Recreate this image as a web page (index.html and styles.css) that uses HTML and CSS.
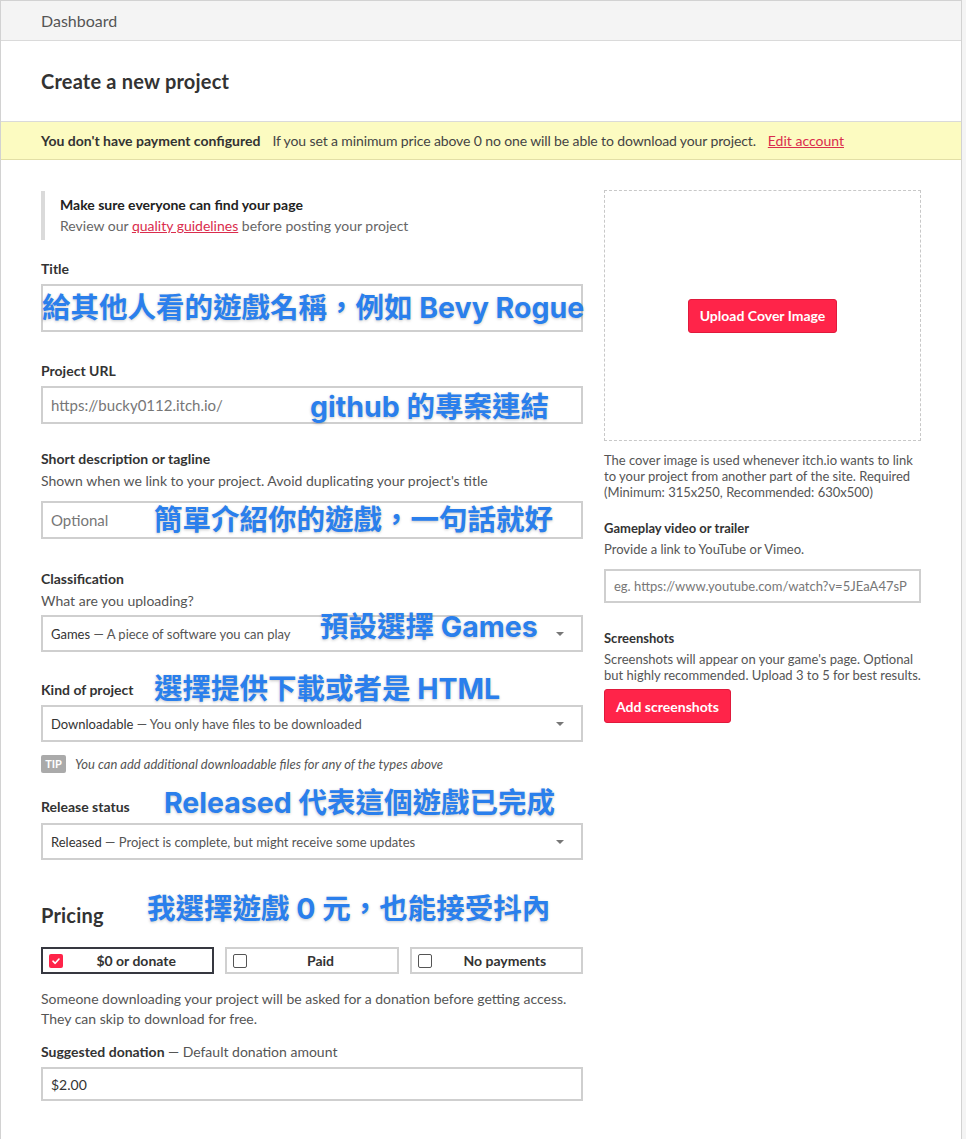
FILE: index.html
```html
<!DOCTYPE html>
<html lang="zh-Hant">
<head>
    <meta charset="UTF-8">
    <meta name="viewport" content="width=device-width, initial-scale=1.0">
    <title>Create a new project</title>
    <link rel="stylesheet" href="styles.css">
</head>
<body>
    <div class="page">
        <header class="top-bar">Dashboard</header>

        <div class="title-bar">
            <h2>Create a new project</h2>
        </div>

        <div class="warning">
            <strong>You don't have payment configured</strong>
            <span>If you set a minimum price above 0 no one will be able to download your project.</span>
            <a href="#">Edit account</a>
        </div>

        <div class="content">
            <div class="left-col">
                <div class="notice">
                    <strong>Make sure everyone can find your page</strong>
                    <p>Review our <a href="#">quality guidelines</a> before posting your project</p>
                </div>

                <div class="field field-title">
                    <label class="label">Title</label>
                    <div class="text-input big"></div>
                    <span class="note note-title">給其他人看的遊戲名稱，例如 Bevy Rogue</span>
                </div>

                <div class="field field-url">
                    <label class="label">Project URL</label>
                    <div class="text-input"><span class="prefix">https://bucky0112.itch.io/</span></div>
                    <span class="note note-url">github 的專案連結</span>
                </div>

                <div class="field field-short">
                    <label class="label">Short description or tagline</label>
                    <div class="sub">Shown when we link to your project. Avoid duplicating your project's title</div>
                    <div class="text-input short-input"><span class="placeholder">Optional</span></div>
                    <span class="note note-short">簡單介紹你的遊戲，一句話就好</span>
                </div>

                <div class="field field-class">
                    <label class="label">Classification</label>
                    <div class="sub">What are you uploading?</div>
                    <div class="select class-select"><span class="strong-opt">Games</span> — A piece of software you can play<i class="arrow"></i></div>
                    <span class="note note-class">預設選擇 Games</span>
                </div>

                <div class="field field-kind">
                    <label class="label">Kind of project</label>
                    <div class="select"><span class="strong-opt">Downloadable</span> — You only have files to be downloaded<i class="arrow"></i></div>
                    <span class="note note-kind">選擇提供下載或者是 HTML</span>
                </div>

                <div class="tip">
                    <span class="tip-badge">TIP</span>
                    <em>You can add additional downloadable files for any of the types above</em>
                </div>

                <div class="field field-release">
                    <label class="label">Release status</label>
                    <div class="select"><span class="strong-opt">Released</span> — Project is complete, but might receive some updates<i class="arrow"></i></div>
                    <span class="note note-release">Released 代表這個遊戲已完成</span>
                </div>

                <div class="pricing-head">
                    <h2>Pricing</h2>
                    <span class="note note-pricing">我選擇遊戲 0 元，也能接受抖內</span>
                </div>

                <div class="price-options">
                    <div class="price-btn selected">
                        <span class="check on">
                            <svg viewBox="0 0 14 14" width="14" height="14"><polyline points="4,7.2 6.2,9.3 10,5" fill="none" stroke="#fff" stroke-width="1.6" stroke-linecap="round" stroke-linejoin="round"/></svg>
                        </span>
                        <span class="price-label">$0 or donate</span>
                    </div>
                    <div class="price-btn">
                        <span class="check"></span>
                        <span class="price-label">Paid</span>
                    </div>
                    <div class="price-btn">
                        <span class="check"></span>
                        <span class="price-label">No payments</span>
                    </div>
                </div>

                <p class="pricing-note">Someone downloading your project will be asked for a donation before getting access. They can skip to download for free.</p>

                <div class="field field-donation">
                    <label class="label">Suggested donation <span class="label-sub">— Default donation amount</span></label>
                    <div class="text-input donation-input">$2.00</div>
                </div>
            </div>

            <div class="right-col">
                <div class="cover-box">
                    <button class="red-button">Upload Cover Image</button>
                </div>
                <p class="side-text cover-text">The cover image is used whenever itch.io wants to link to your project from another part of the site. Required (Minimum: 315x250, Recommended: 630x500)</p>

                <div class="side-label video-label">Gameplay video or trailer</div>
                <p class="side-text side-sub">Provide a link to YouTube or Vimeo.</p>
                <div class="text-input video-input"><span class="placeholder">eg. https://www.youtube.com/watch?v=5JEaA47sP</span></div>

                <div class="side-label shots-label">Screenshots</div>
                <p class="side-text side-sub">Screenshots will appear on your game's page. Optional but highly recommended. Upload 3 to 5 for best results.</p>
                <button class="red-button shots-button">Add screenshots</button>
            </div>
        </div>
    </div>
</body>
</html>
```

FILE: styles.css
```css
/* Global */
body {
    margin: 0;
    padding: 0;
    background-color: #f4f4f4;
    font-family: Lato, "Noto Sans CJK TC", sans-serif;
    color: #333;
}

.page {
    width: 960px;
    min-height: 1200px;
    background-color: #fff;
    border: 1px solid #d2d2d2;
    border-bottom: none;
}

.top-bar {
    height: 39px;
    line-height: 39px;
    padding: 0 40px;
    background-color: #f4f4f4;
    border-bottom: 1px solid #dadada;
    font-size: 16px;
    color: #555;
}

.title-bar {
    height: 80px;
    display: flex;
    align-items: center;
    padding: 0 40px;
    border-bottom: 1px solid #dadada;
}

h2 {
    margin: 0;
    font-size: 20px;
    line-height: 24px;
    font-weight: 700;
    color: #333;
    letter-spacing: 0.2px;
}

.warning {
    height: 37px;
    display: flex;
    align-items: center;
    gap: 12px;
    padding: 0 40px;
    background-color: #fcfbc1;
    border-bottom: 1px solid #e2dfa6;
    font-size: 14px;
    color: #444;
}

.warning span {
    letter-spacing: -0.12px;
}

.warning strong {
    color: #333;
}

a {
    color: #da2c4d;
    text-decoration: underline;
}

.content {
    display: flex;
    gap: 21px;
    padding: 30px 40px 40px;
}

.left-col {
    width: 542px;
}

.right-col {
    width: 317px;
}

/* Left column */
.notice {
    padding: 3px 0 4px 15px;
    margin-top: 1px;
    border-left: 4px solid #dadada;
    font-size: 14px;
    line-height: 21px;
}

.notice strong {
    color: #222;
}

.notice p {
    margin: 0;
    color: #666;
}

.field {
    position: relative;
}

.label {
    display: block;
    font-size: 14px;
    font-weight: 700;
    line-height: 20px;
    margin-bottom: 5px;
    color: #333;
}

.label-sub {
    font-weight: 400;
    color: #555;
}

.sub {
    font-size: 14px;
    line-height: 20px;
    color: #555;
    margin-top: -3px;
}

.text-input {
    box-sizing: border-box;
    height: 38px;
    border: 2px solid #cfcfcf;
    padding: 0 8px;
    display: flex;
    align-items: center;
    font-size: 15px;
    color: #333;
    overflow: hidden;
    white-space: nowrap;
}

.text-input.big {
    height: 48px;
}

.prefix,
.placeholder {
    color: #777;
}

.field-title {
    margin-top: 19px;
}

.field-url {
    margin-top: 29px;
}

.field-short {
    margin-top: 25px;
}

.short-input {
    margin-top: 10px;
}

.select {
    position: relative;
    box-sizing: border-box;
    height: 37px;
    border: 2px solid #cfcfcf;
    padding: 0 8px;
    display: flex;
    align-items: center;
    font-size: 13px;
    color: #555;
    white-space: pre;
}

.strong-opt {
    color: #333;
}

.arrow {
    position: absolute;
    right: 17px;
    top: 50%;
    margin-top: -2px;
    width: 0;
    height: 0;
    border-left: 4px solid transparent;
    border-right: 4px solid transparent;
    border-top: 4px solid #777;
}

.field-class {
    margin-top: 30px;
}

.class-select {
    margin-top: 4px;
}

.field-kind {
    margin-top: 28px;
}

.tip {
    margin-top: 13px;
    display: flex;
    align-items: center;
    gap: 9px;
    font-size: 13px;
    color: #555;
}

.tip-badge {
    width: 25px;
    height: 18px;
    line-height: 18px;
    text-align: center;
    background-color: #aaa;
    color: #fff;
    font-size: 11px;
    font-weight: 700;
    border-radius: 2px;
}

.field-release {
    margin-top: 24px;
}

.field-release .label {
    margin-bottom: 6px;
}

.pricing-head {
    position: relative;
    margin-top: 43px;
}

.price-options {
    margin-top: 20px;
    display: grid;
    grid-template-columns: repeat(3, 1fr);
    gap: 11px;
}

.price-btn {
    box-sizing: border-box;
    height: 27px;
    display: flex;
    align-items: center;
    padding: 0 6px;
    border: 2px solid #d0d0d0;
    font-size: 14px;
    font-weight: 700;
    color: #333;
}

.price-btn.selected {
    border-color: #363840;
}

.check {
    box-sizing: border-box;
    width: 14px;
    height: 14px;
    border: 1.5px solid #555;
    border-radius: 2px;
    background-color: #fff;
    display: flex;
}

.check.on {
    border: none;
    background-color: #ff2449;
}

.price-label {
    flex: 1;
    text-align: center;
    margin-left: 3px;
}

.pricing-note {
    margin: 15px 0 0;
    font-size: 14px;
    line-height: 20px;
    color: #555;
}

.field-donation {
    margin-top: 13px;
}

.donation-input {
    height: 34px;
    font-size: 14px;
}

/* Blue annotations drawn over the form */
.note {
    position: absolute;
    font-family: Inter, "Noto Sans CJK TC", sans-serif;
    font-size: 28.5px;
    font-weight: 700;
    line-height: 34px;
    color: #2a7fec;
    text-shadow: 0 1px 3px rgba(0, 0, 0, 0.22);
    white-space: nowrap;
}

.note-title {
    top: 32px;
    left: 1px;
}

.note-url {
    top: 29px;
    left: 269px;
}

.note-short {
    top: 54px;
    left: 113px;
}

.note-class {
    top: 41px;
    left: 279px;
}

.note-kind {
    top: -8px;
    left: 113px;
}

.note-release {
    top: -11px;
    left: 123px;
}

.note-pricing {
    top: -11px;
    left: 106px;
}

/* Right column */
.cover-box {
    box-sizing: border-box;
    height: 251px;
    border: 1px dashed #c8c8c8;
    display: flex;
    justify-content: center;
    align-items: center;
}

.red-button {
    height: 34px;
    padding: 0 11px;
    background-color: #ff2449;
    color: #fff;
    border: 1px solid #e01a3c;
    border-radius: 3px;
    font-family: Lato, sans-serif;
    font-size: 14px;
    font-weight: 700;
    cursor: pointer;
}

.side-text {
    margin: 0;
    font-size: 13px;
    line-height: 16px;
    color: #555;
}

.cover-text {
    margin-top: 11px;
}

.side-label {
    font-size: 13px;
    font-weight: 700;
    line-height: 16px;
    color: #333;
}

.video-label {
    margin-top: 20px;
}

.side-sub {
    margin-top: 5px;
}

.video-input {
    margin-top: 12px;
    height: 34px;
    font-size: 13px;
}

.shots-label {
    margin-top: 27px;
}

.shots-button {
    margin-top: 6px;
    display: block;
}
```
